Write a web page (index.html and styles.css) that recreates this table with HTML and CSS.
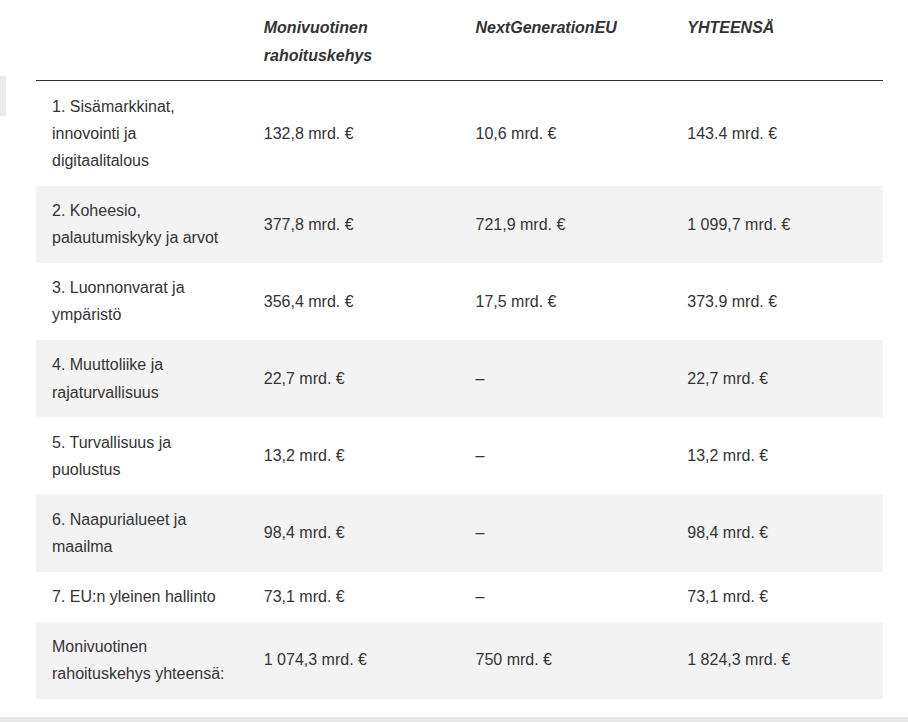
FILE: index.html
```html
<!DOCTYPE html>
<html lang="fi">
<head>
<meta charset="utf-8">
<title>Rahoitus</title>
<link rel="stylesheet" href="styles.css">
</head>
<body>
<div class="page">
  <div class="main">
    <div class="side-tab"></div>
    <table class="budget">
      <thead>
        <tr>
          <th></th>
          <th>Monivuotinen rahoituskehys</th>
          <th>NextGenerationEU</th>
          <th>YHTEENSÄ</th>
        </tr>
      </thead>
      <tbody>
        <tr><td>1. Sisämarkkinat, innovointi ja digitaalitalous</td><td>132,8 mrd. €</td><td>10,6 mrd. €</td><td>143.4 mrd. €</td></tr>
        <tr><td>2. Koheesio, palautumiskyky ja arvot</td><td>377,8 mrd. €</td><td>721,9 mrd. €</td><td>1 099,7 mrd. €</td></tr>
        <tr><td>3. Luonnonvarat ja ympäristö</td><td>356,4 mrd. €</td><td>17,5 mrd. €</td><td>373.9 mrd. €</td></tr>
        <tr><td>4. Muuttoliike ja rajaturvallisuus</td><td>22,7 mrd. €</td><td>–</td><td>22,7 mrd. €</td></tr>
        <tr><td>5. Turvallisuus ja puolustus</td><td>13,2 mrd. €</td><td>–</td><td>13,2 mrd. €</td></tr>
        <tr><td>6. Naapurialueet ja maailma</td><td>98,4 mrd. €</td><td>–</td><td>98,4 mrd. €</td></tr>
        <tr><td>7. EU:n yleinen hallinto</td><td>73,1 mrd. €</td><td>–</td><td>73,1 mrd. €</td></tr>
        <tr><td>Monivuotinen rahoituskehys yhteensä:</td><td>1 074,3 mrd. €</td><td>750 mrd. €</td><td>1 824,3 mrd. €</td></tr>
      </tbody>
    </table>
  </div>
  <div class="bottom-bar"></div>
</div>
</body>
</html>
```

FILE: styles.css
```css
html, body {
  margin: 0;
  padding: 0;
  background: #ffffff;
}

body {
  font-family: "Liberation Sans", Arial, sans-serif;
  color: #333333;
  font-size: 16px;
}

.page {
  padding-top: 3px;
}

.main {
  display: flex;
  align-items: flex-start;
}

.side-tab {
  width: 6px;
  height: 40px;
  margin-top: 73px;
  background: #ebebeb;
  flex: none;
}

.budget {
  margin-left: 30px;
  width: 847px;
  border-collapse: collapse;
  table-layout: fixed;
  font-size: 16px;
  line-height: 27.2px;
}

.budget th,
.budget td {
  padding: 11.4px 16px;
  text-align: left;
  width: 25%;
}

.budget th {
  vertical-align: top;
  font-weight: bold;
  font-style: italic;
  color: #333333;
  border-bottom: 1px solid #333333;
}

.budget td {
  vertical-align: middle;
}

.budget tbody tr:nth-child(even) {
  background: #f3f3f3;
}

.bottom-bar {
  margin-top: 18px;
  height: 6px;
  background: #e8e8e8;
}
```
